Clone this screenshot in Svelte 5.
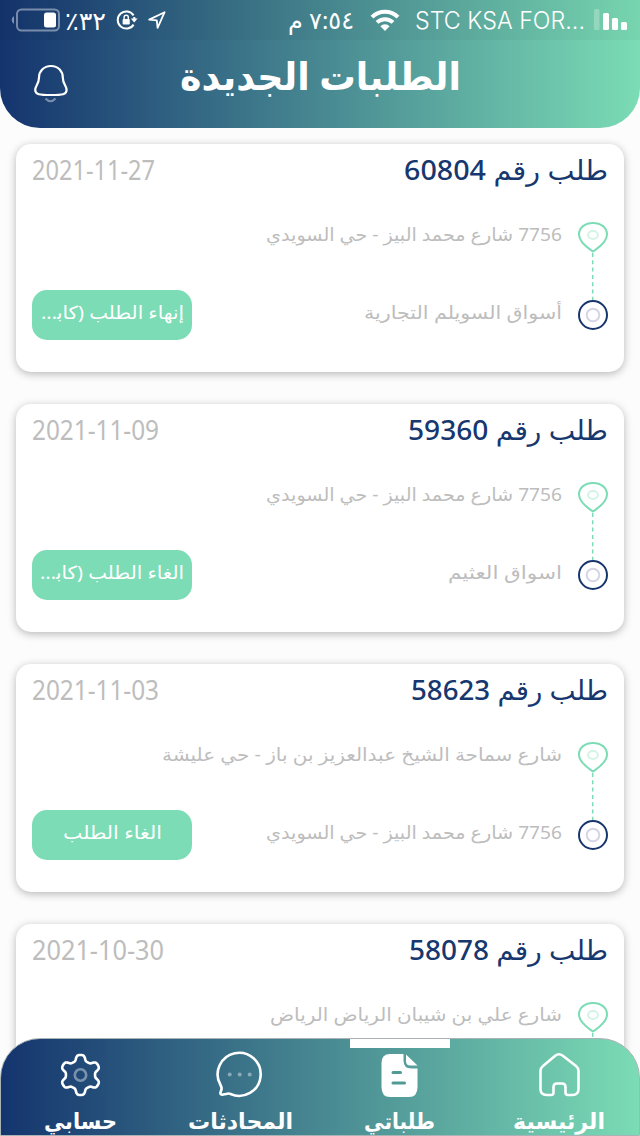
<script lang="ts">
  type Label = { text: string; width: number };

  type Order = {
    id: string;
    title: number;
    date: Label;
    from: Label;
    to?: Label;
    action?: Label;
  };

  const orders: Order[] = [
    {
      id: "60804",
      title: 204,
      date: { text: "2021-11-27", width: 123 },
      from: { text: "7756 شارع محمد البيز - حي السويدي", width: 296 },
      to: { text: "أسواق السويلم التجارية", width: 198 },
      action: { text: "إنهاء الطلب (كاب‍...", width: 143 },
    },
    {
      id: "59360",
      title: 200,
      date: { text: "2021-11-09", width: 127 },
      from: { text: "7756 شارع محمد البيز - حي السويدي", width: 296 },
      to: { text: "اسواق العثيم", width: 114 },
      action: { text: "الغاء الطلب (كاب‍...", width: 144 },
    },
    {
      id: "58623",
      title: 197,
      date: { text: "2021-11-03", width: 127 },
      from: { text: "شارع سماحة الشيخ عبدالعزيز بن باز - حي عليشة", width: 400 },
      to: { text: "7756 شارع محمد البيز - حي السويدي", width: 296 },
      action: { text: "الغاء الطلب", width: 99 },
    },
    {
      id: "58078",
      title: 199,
      date: { text: "2021-10-30", width: 132 },
      from: { text: "شارع علي بن شيبان الرياض الرياض", width: 292 },
    },
  ];

  const tabs = [
    { key: "home", label: { text: "الرئيسية", width: 92 } },
    { key: "orders", label: { text: "طلباتي", width: 71 } },
    { key: "chats", label: { text: "المحادثات", width: 105 } },
    { key: "account", label: { text: "حسابي", width: 73 } },
  ];

  // six rounded teeth
  const gear =
    "M" +
    Array.from({ length: 180 }, (_, i) => {
      const t = (i / 180) * Math.PI * 2;
      const r = 17.3 + 2.9 * Math.tanh(1.8 * Math.cos(6 * t));
      return `${(23.5 + r * Math.sin(t)).toFixed(2)} ${(24 - r * Math.cos(t)).toFixed(2)}`;
    }).join("L") +
    "Z";

  let active = $state("orders");
</script>

<!-- one line of text set to a fixed measure, baseline on the bottom edge -->
{#snippet line(text: string, width: number)}
  <svg class="line" {width}>
    <text x="50%" y="100%" text-anchor="middle" textLength={width} lengthAdjust="spacingAndGlyphs">{text}</text>
  </svg>
{/snippet}

<div class="screen" dir="rtl">
  <header class="header">
    <div class="status">
      <svg class="signal" viewBox="0 0 34 22" width="34" height="22" fill="#fff">
        <rect x="0" y="0" width="5.5" height="21" rx="1.5" opacity="0.25" />
        <rect x="9" y="4" width="6" height="17" rx="1.5" />
        <rect x="18" y="9" width="6" height="12" rx="1.5" />
        <rect x="27" y="13" width="6" height="8" rx="1.5" />
      </svg>
      <span class="carrier" dir="ltr">{@render line("STC KSA FOR...", 170)}</span>
      <svg class="wifi" viewBox="0 0 30 22" width="30" height="22">
        <g fill="none" stroke="#fff" stroke-width="4">
          <path d="M2 8.2A18.5 18.5 0 0 1 28 8.2" />
          <path d="M7 13.4A11.5 11.5 0 0 1 23 13.4" />
        </g>
        <path d="M15 22l-4.6-4.8a6.6 6.6 0 0 1 9.2 0z" fill="#fff" />
      </svg>
      <span class="time">{@render line("٧:٥٤ م", 66)}</span>
      <svg class="locate" viewBox="0 0 18 18" width="18" height="18">
        <path d="M1.2 8.6L16.6 1.2 9.6 16.8 8.8 9.4z" fill="none" stroke="#fff" stroke-width="1.8" stroke-linejoin="round" />
      </svg>
      <svg class="rotation" viewBox="0 0 22 20" width="22" height="20">
        <path d="M17.6 5.4A8.600 8.600 0 1 0 17.600 14.600M18.300 9V7" fill="none" stroke="#fff" stroke-width="2" />
        <path d="M14.800 8.400h6.800L18.200 12.600z" fill="#fff" />
        <rect x="6.600" y="9" width="7.200" height="5.400" rx="1" fill="#fff" />
        <path d="M8.100 9V7.400a2.100 2.100 0 0 1 4.200 0V9" fill="none" stroke="#fff" stroke-width="1.400" />
      </svg>
      <span class="percent" dir="ltr">{@render line("٪٣٢", 41)}</span>
      <svg class="battery" viewBox="0 0 50 24" width="50" height="24">
        <rect x="7" y="1.500" width="42" height="21" rx="4.500" fill="none" stroke="#fff" stroke-opacity="0.42" stroke-width="2" />
        <rect x="34" y="4.500" width="12" height="15" rx="2.500" fill="#fff" />
        <path d="M4 8v8a4.600 4.600 0 0 1 0-8z" fill="#fff" fill-opacity="0.45" />
      </svg>
    </div>
    <div class="title-row">
      <h1>{@render line("الطلبات الجديدة", 281)}</h1>
      <svg class="bell" viewBox="0 0 36 40" width="36" height="40" fill="none" stroke="#fff" stroke-width="2.2">
        <path d="M18 2C10.500 2 6 7.500 6 13.500C6 20 2.200 22 2.200 26C2.200 30.500 6.500 31 18 31S33.600 30.500 33.600 26C33.600 22 29.800 20 29.800 13.500C29.800 7.500 25.500 2 18 2Z" />
        <path d="M12.500 34.500Q17.500 40 22.500 34.500" opacity="0.4" />
      </svg>
    </div>
  </header>

  <main class="list">
    {#each orders as order (order.id)}
      <article class="card">
        <div class="card-head">
          <h2>{@render line(`طلب رقم ${order.id}`, order.title)}</h2>
          <time dir="ltr">{@render line(order.date.text, order.date.width)}</time>
        </div>
        <div class="card-body">
          <svg class="route" viewBox="0 0 30 110" width="30" height="110" fill="none">
            <path d="M15 30.500C11 27.500 1 22 1 13.500C1 6.500 7 2 15 2S29 6.500 29 13.500C29 22 19 27.500 15 30.500Z" stroke="#7bdcb5" stroke-width="2" />
            <ellipse cx="15" cy="14" rx="5" ry="4" stroke="#d3f3e6" stroke-width="2" />
            <path d="M14.700 32V80" stroke="#7bdcb5" stroke-width="1.500" stroke-dasharray="4 3.300" />
            <circle cx="15" cy="94" r="14" stroke="#17356d" stroke-width="2" />
            <circle cx="15" cy="94" r="6.300" stroke="#d6d5e6" stroke-width="2" />
          </svg>
          <div class="places">
            {@render line(order.from.text, order.from.width)}
            {#if order.to}
              {@render line(order.to.text, order.to.width)}
            {/if}
          </div>
          {#if order.action}
            <button type="button">{@render line(order.action.text, order.action.width)}</button>
          {/if}
        </div>
      </article>
    {/each}
  </main>

  <nav class="tabs">
    {#each tabs as tab (tab.key)}
      <button type="button" class="tab" class:active={active === tab.key} onclick={() => (active = tab.key)}>
        <svg viewBox="0 0 48 48" width="48" height="48" fill="none" stroke="#fff" stroke-width="2.6" stroke-linecap="round" stroke-linejoin="round">
          {#if tab.key === "home"}
            <path d="M5.500 20Q5.500 17 8 15L20.500 4.500Q24 2 27.500 4.500L41 15Q43.500 17 43.500 20V38Q43.500 44 37.500 44H33Q30.500 44 30.500 41.500V36Q30.500 32.500 27 32.500H22Q18.500 32.500 18.500 36V41.500Q18.500 44 16 44H11.500Q5.500 44 5.500 38Z" />
          {:else if tab.key === "orders"}
            <path d="M14 3H27.500V9.500Q27.500 17.500 35.500 17.500H41.500V36Q41.500 46 33 46H14Q5.500 46 5.500 36V12Q5.500 3 14 3Z" fill="#fff" stroke="none" />
            <path d="M30 3.500L41.500 14.500H34.500Q30 14.500 30 10Z" fill="#fff" stroke="none" />
            <path d="M17 21.500H24.500M17 32H28.500" stroke="#529a94" stroke-width="3" />
          {:else if tab.key === "chats"}
            <path d="M4.500 34A21.500 21.500 0 1 1 14.500 43Q13 42 10 43L6 43.700Q4 43.500 4.500 41.500L5.600 38Q5.600 36 4.500 34Z" />
            <g fill="#fff" stroke="none" opacity="0.4">
              <circle cx="13.700" cy="23.500" r="2" />
              <circle cx="23.700" cy="23.500" r="2" />
              <circle cx="33.700" cy="23.500" r="2" />
            </g>
          {:else}
            <path d={gear} />
            <circle cx="23.500" cy="24" r="5.700" opacity="0.4" />
          {/if}
        </svg>
        {@render line(tab.label.text, tab.label.width)}
      </button>
    {/each}
  </nav>
</div>

<style>
  :global(body) {
    background: #fcfcfc;
    overflow: hidden;
  }

  .screen {
    position: relative;
    height: 1136px;
    overflow: hidden;
    background: #fcfcfc;
    font-family: "Noto Sans", "DejaVu Sans", sans-serif;
  }

  .line {
    display: block;
    flex: none;
    height: 1em;
    overflow: visible;
    fill: currentColor;
    stroke: none;
  }

  .header {
    height: 128px;
    border-radius: 0 0 40px 40px;
    overflow: hidden;
    background: linear-gradient(90deg, #14346e, #7bdcb5);
    color: #fff;
  }

  .status {
    display: flex;
    align-items: center;
    box-sizing: border-box;
    height: 40px;
    padding: 0 12px;
    background: rgba(0, 0, 0, 0.03);
    white-space: nowrap;
  }

  .status svg {
    flex: none;
  }

  .carrier {
    margin-right: 9px;
    padding-bottom: 6px;
    font: 24px Inter, sans-serif;
    font-weight: 300;
  }

  .wifi {
    margin-right: 15px;
  }

  .time {
    margin-right: 16px;
    padding-bottom: 6px;
    font-size: 24px;
  }

  .locate {
    margin-right: 122px;
  }

  .rotation {
    margin-right: 10px;
  }

  .percent {
    margin-right: 10px;
    padding-bottom: 6px;
    font-size: 25px;
  }

  .battery {
    margin-right: 5px;
  }

  .title-row {
    display: grid;
    grid-template-columns: 1fr auto 1fr;
    height: 88px;
  }

  h1 {
    grid-column: 2;
    margin: 12px 0 0;
    font-size: 38px;
  }

  .bell {
    justify-self: end;
    margin: 24px 0 0 33px;
  }

  .list {
    display: flex;
    flex-direction: column;
    gap: 32px;
    padding: 16px;
  }

  .card {
    flex: none;
    box-sizing: border-box;
    height: 228px;
    padding: 9px 16px 0;
    border-radius: 15px;
    background: #fff;
    box-shadow: 0 2px 8px rgba(0, 0, 0, 0.28);
  }

  .card-head {
    display: flex;
    justify-content: space-between;
    font-size: 27px;
  }

  h2 {
    margin: 0;
    color: #17376f;
    font-size: 27px;
    font-weight: 500;
  }

  time {
    color: #bdbdbd;
  }

  .card-body {
    display: flex;
    margin-top: 41px;
  }

  .route {
    flex: none;
  }

  .places {
    display: flex;
    flex: 1;
    flex-direction: column;
    gap: 60px;
    min-width: 0;
    padding: 2px 16px 0 0;
    color: #bdbdbd;
    font-size: 18px;
  }

  .card-body button {
    display: flex;
    flex: none;
    justify-content: center;
    width: 160px;
    height: 50px;
    margin-top: 69px;
    padding: 11px 0 0;
    border: 0;
    border-radius: 15px;
    background: #7bdcb5;
    color: #fff;
    font: inherit;
    font-size: 18px;
  }

  .tabs {
    position: absolute;
    inset: auto 0 0;
    display: grid;
    grid-template-columns: repeat(4, 1fr);
    box-sizing: border-box;
    height: 98px;
    border: 1px solid #a9b3b5;
    border-radius: 40px 40px 0 0;
    background: linear-gradient(90deg, #14346e, #7bdcb5);
  }

  .tab {
    display: flex;
    flex-direction: column;
    align-items: center;
    gap: 8px;
    padding: 12px 0 0;
    border: 0;
    background: none;
    color: #fff;
    font: bold 22px "Noto Sans", "DejaVu Sans", sans-serif;
  }

  .tab.active {
    background: linear-gradient(#fff, #fff) center top / 100px 9px no-repeat;
  }
</style>
